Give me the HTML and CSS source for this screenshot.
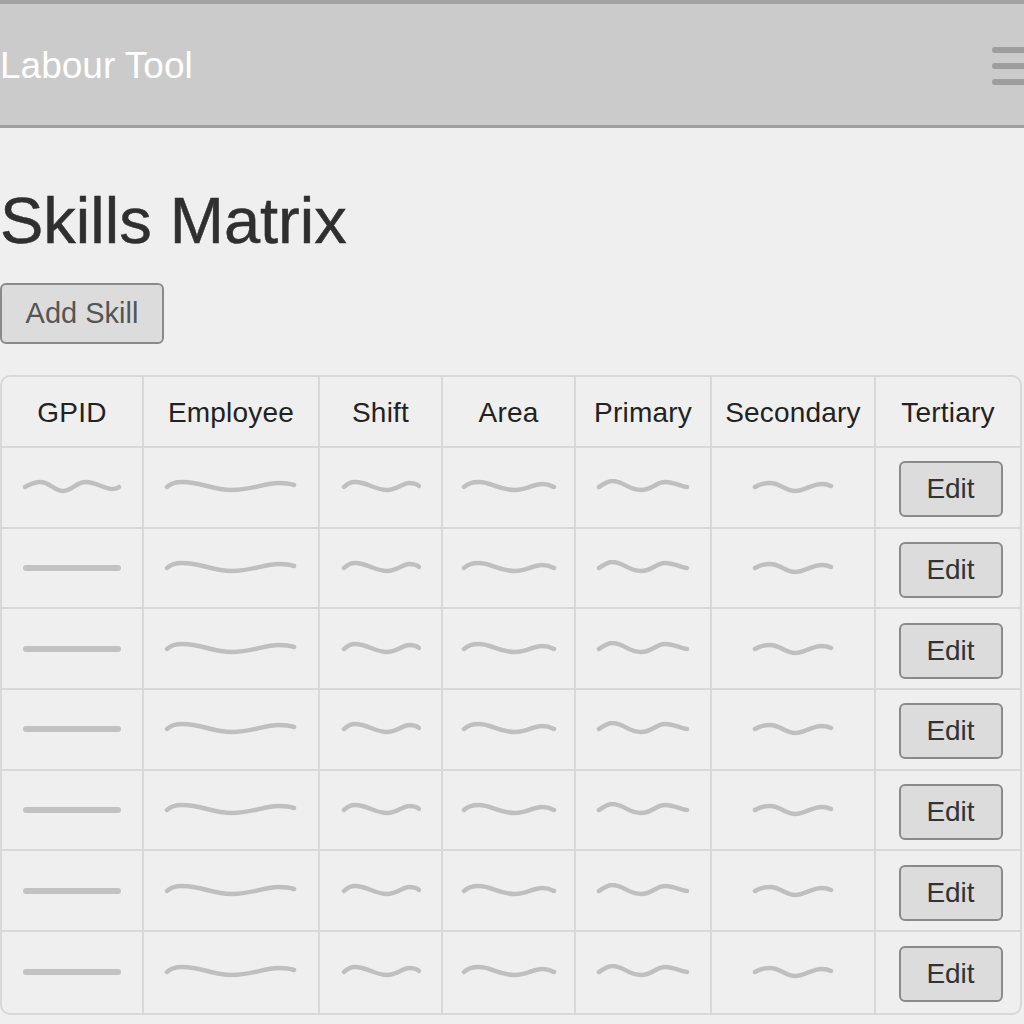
FILE: index.html
```html
<!DOCTYPE html>
<html lang="en">
<head>
<meta charset="utf-8">
<title>Labour Tool - Skills Matrix</title>
<link rel="stylesheet" href="styles.css">
</head>
<body>
<header class="topbar">
  <div class="brand">Labour Tool</div>
  <div class="burger"><span></span><span></span><span></span></div>
</header>
<main class="page">
  <h1 class="title">Skills Matrix</h1>
  <button class="btn add">Add Skill</button>
  <div class="matrix" id="matrix">
    <div class="cell head">GPID</div>
    <div class="cell head">Employee</div>
    <div class="cell head">Shift</div>
    <div class="cell head">Area</div>
    <div class="cell head">Primary</div>
    <div class="cell head">Secondary</div>
    <div class="cell head last">Tertiary</div>
  </div>
</main>
<script>
(function(){
  var m = document.getElementById('matrix');
  var ns = 'http://www.w3.org/2000/svg';
  var cols = [
    {w:100, wave:'M3 8 C 9 5, 12 3, 18 3 C 28 3, 32 12, 41 12 C 50 12, 54 3, 64 3 C 74 3, 82 10, 90 10 C 94 10, 96 9, 97 8'},
    {w:134, d:'M3 8 C 6 5, 10 3, 18 3 C 38 3, 48 11, 68 11 C 88 11, 100 4, 115 4 C 122 4, 127 5, 130 6'},
    {w:80, d:'M3 8 C 6 5, 9 3, 14 3 C 26 3, 34 11, 46 11 C 56 11, 62 4, 68 4 C 73 4, 76 5, 78 7'},
    {w:96, d:'M3 8 C 6 5, 10 3, 18 3 C 30 3, 38 11, 54 11 C 66 11, 72 5, 81 5 C 88 5, 91 7, 93 8'},
    {w:94, d:'M3 8 C 8 5, 11 2, 16 2 C 28 2, 32 11, 45 11 C 56 11, 60 3, 69 3 C 78 3, 84 7, 91 8'},
    {w:82, d:'M3 8 C 8 5, 12 4, 18 4 C 28 4, 34 12, 43 12 C 52 12, 60 5, 70 5 C 74 5, 77 6, 79 7'}
  ];
  function svgFor(c, row){
    var s = document.createElementNS(ns,'svg');
    s.setAttribute('width', c.w); s.setAttribute('height', 16);
    s.setAttribute('viewBox','0 0 '+c.w+' 16');
    s.setAttribute('class','squiggle');
    var p = document.createElementNS(ns,'path');
    var d = c.d;
    if (c.wave) d = row === 0 ? c.wave : 'M4 8 L 96 8';
    p.setAttribute('d', d);
    if (c.wave && row > 0) p.setAttribute('class','flat');
    s.appendChild(p);
    return s;
  }
  for (var r = 0; r < 7; r++) {
    for (var i = 0; i < 6; i++) {
      var cell = document.createElement('div');
      cell.className = 'cell' + (r === 6 ? ' bottom' : '');
      cell.appendChild(svgFor(cols[i], r));
      m.appendChild(cell);
    }
    var last = document.createElement('div');
    last.className = 'cell last' + (r === 6 ? ' bottom' : '');
    var b = document.createElement('button');
    b.className = 'btn edit';
    b.textContent = 'Edit';
    last.appendChild(b);
    m.appendChild(last);
  }
})();
</script>
</body>
</html>
```

FILE: styles.css
```css
* { box-sizing: border-box; }
html, body { margin: 0; padding: 0; }
body {
  background: #efefef;
  font-family: "Liberation Sans", Arial, sans-serif;
  overflow: hidden;
}
.topbar {
  height: 128px;
  background: #cbcbcb;
  border-top: 4px solid #a2a2a2;
  border-bottom: 3px solid #9f9f9f;
  display: flex;
  align-items: center;
  justify-content: space-between;
  overflow: hidden;
}
.brand {
  color: #ffffff;
  font-size: 37px;
  margin-left: 0;
  margin-top: 2px;
}
.burger {
  display: flex;
  flex-direction: column;
  gap: 10px;
  width: 44px;
  margin-right: -12px;
  margin-top: 2px;
}
.burger span {
  display: block;
  height: 6px;
  border-radius: 3px;
  background: #9e9e9e;
}
.page { padding: 0; }
.title {
  margin: 61px 0 0 0;
  font-size: 65px;
  line-height: 64px;
  font-weight: 400;
  color: #2f2f2f;
  -webkit-text-stroke: 0.5px #2f2f2f;
}
.btn {
  font-family: "Liberation Sans", Arial, sans-serif;
  background: #dcdcdc;
  border: 2px solid #8a8a8a;
  border-radius: 6px;
  display: flex;
  align-items: center;
  justify-content: center;
  padding: 0;
}
.add {
  margin-top: 30px;
  width: 164px;
  height: 61px;
  font-size: 29px;
  color: #555555;
}
.matrix {
  margin-top: 31px;
  width: 1022px;
  border: 2px solid #d8d8d8;
  border-radius: 10px;
  overflow: hidden;
  display: grid;
  grid-template-columns: 142px 176px 123px 133px 136px 164px 1fr;
  grid-template-rows: 71px;
  grid-auto-rows: 80.7px;
}
.cell {
  border-right: 2px solid #d8d8d8;
  border-bottom: 2px solid #d8d8d8;
  display: flex;
  align-items: center;
  justify-content: center;
}
.cell.last { border-right: none; }
.cell.bottom { border-bottom: none; }
.head {
  font-size: 28px;
  letter-spacing: 0.2px;
  color: #222222;
  padding-top: 2px;
}
.squiggle { display: block; margin-top: 0; }
.squiggle path {
  fill: none;
  stroke: #bfbfbf;
  stroke-width: 4.5;
  stroke-linecap: round;
  stroke-linejoin: round;
}
.squiggle path.flat { stroke-width: 6; stroke: #c2c2c2; }
.edit {
  width: 104px;
  height: 56px;
  font-size: 28px;
  color: #333333;
  margin-left: 5px;
  margin-top: 4px;
}
```
